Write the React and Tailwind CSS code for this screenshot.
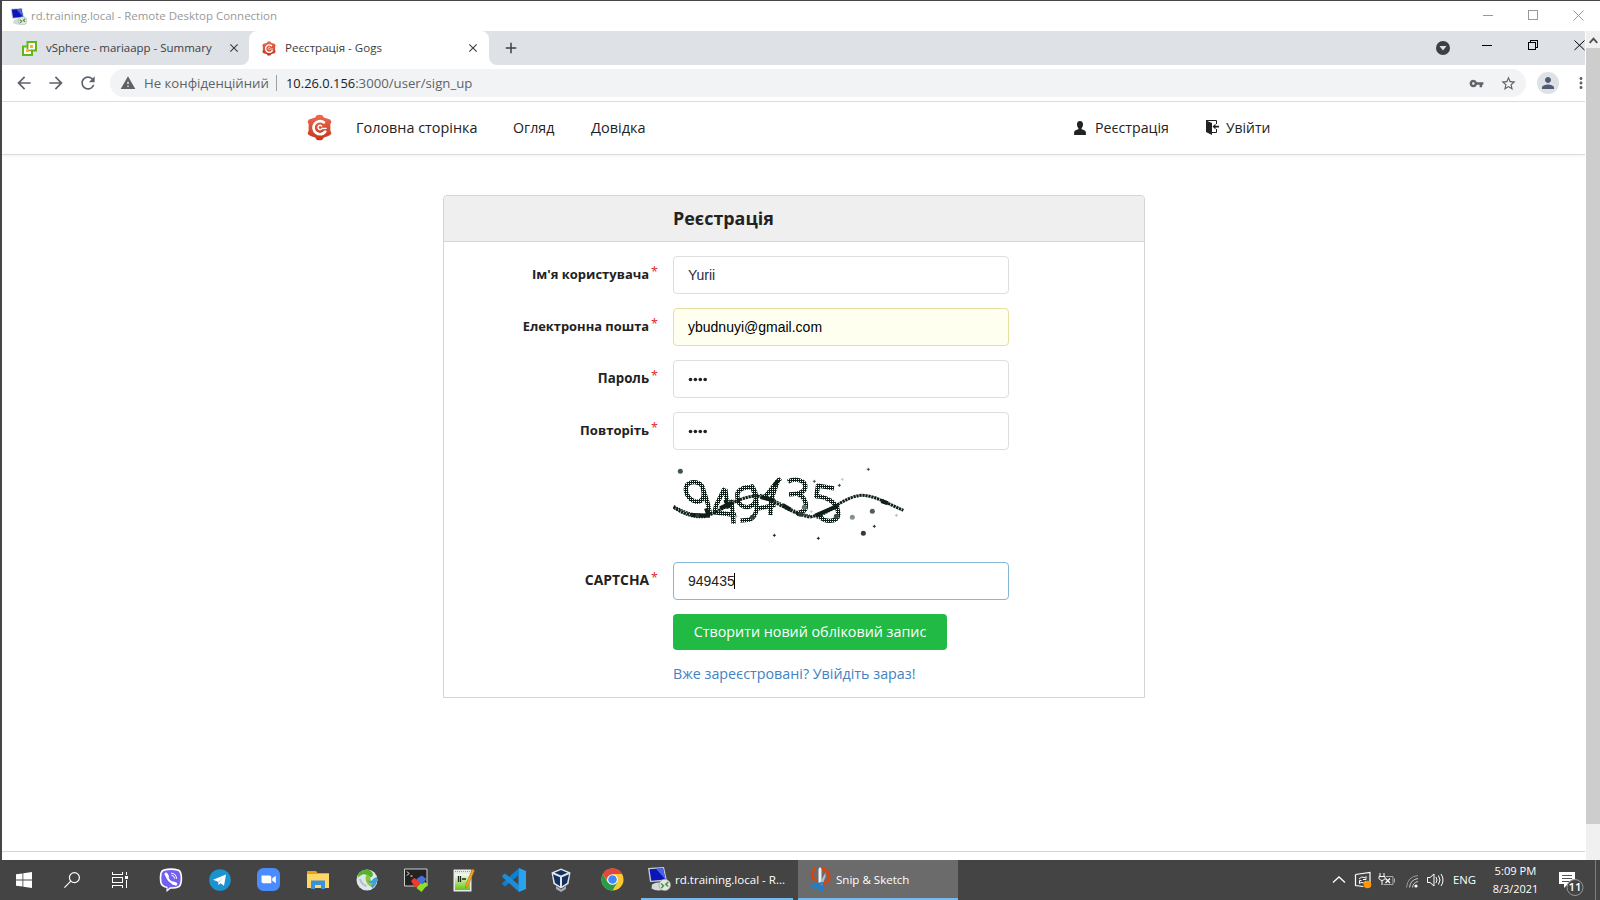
import {
  MdArrowBack, MdArrowForward, MdRefresh, MdWarning, MdVpnKey, MdStarBorder, MdPerson, MdMoreVert, MdClose, MdAdd,
} from "react-icons/md";

function GogsLogo({ className }) {
  return (
    <svg viewBox="0 0 26 27" className={className}>
      <defs>
        <linearGradient id="gogs" x1="0" y1="0" x2="0" y2="1">
          <stop offset="0" stopColor="#ee6a4e" />
          <stop offset="1" stopColor="#c2371d" />
        </linearGradient>
      </defs>
      <g fill="url(#gogs)">
        <path d="M10 .8Q13 -.4 16 .8L17.500 3.200 21.500 4.300Q24.500 4.500 25.400 7.500L24.300 10.500V16.500L25.400 19.500Q24.500 22.500 21.500 22.700L17.500 23.800 16 26.200Q13 27.400 10 26.200L8.500 23.800 4.500 22.700Q1.500 22.500.6 19.500L1.700 16.500V10.500L.6 7.500Q1.500 4.500 4.500 4.300L8.500 3.200z" />
      </g>
      <path d="M17.600 8.200A6.800 6.800 0 1 0 19 17.800" fill="none" stroke="#fff" strokeWidth="2.800" strokeLinecap="round" />
      <path d="M15.200 11.900A2.200 2.200 0 1 0 15.500 14.600L20 14.400" fill="none" stroke="#fff" strokeWidth="1.500" strokeLinecap="round" />
    </svg>
  );
}

function RdpIcon({ className }) {
  return (
    <svg viewBox="0 0 24 24" className={className}>
      <path d="M1 1 L17 0 L20 14 L3 15 Z" fill="#c9ccd3" />
      <path d="M2.5 2.2 L16 1.2 L18.5 12.6 L4.3 13.8 Z" fill="#0b16b8" />
      <path d="M9 1.8 L16 1.2 L18.5 12.6 Z" fill="#4b62e6" />
      <path d="M5 17.5 Q10 14.5 14 16 L17 22.5 Q10 25 4.5 21.5 Z" fill="#d5d8dc" />
      <circle cx="17.8" cy="18" r="5.8" fill="#e3e6e3" stroke="#8c918c" strokeWidth=".6" />
      <path d="M14 16.5 L16.5 18.7 L14.3 21 M21.3 15.2 L18.8 17.2 L21.2 19.4" fill="none" stroke="#3f9b35" strokeWidth="1.5" />
    </svg>
  );
}

const crosses = [
  [625, 43, "#3d4a45"], [547, 73, "#b9cfc8"], [463, 79, "#4b5a54"], [538, 91, "#2f3b37"], [454, 170, "#b9cfc8"],
  [709, 181, "#a9c2b8"], [643, 214, "#1e2e27"], [343, 241, "#15251e"], [475, 250, "#15251e"], [229, 184, "#b0c4bc"],
];
const blobs = [
  [61, 49, 7.5, "#43544d"], [433, 157, 7.5, "#62756d"], [421, 178, 7.5, "#2c3c35"], [277, 187, 7.5, "#33433c"],
  [529, 184, 7.5, "#3a4b43"], [577, 187, 7.5, "#82958d"], [637, 169, 7.5, "#4e6058"], [610, 235, 7.5, "#2d3f37"], [112, 182, 6, "#2c3c35"],
];

function Captcha() {
  return (
    <svg viewBox="39 27 720 240" className="h-20 w-60">
      <defs>
        <pattern id="mesh" width="6" height="6" patternUnits="userSpaceOnUse">
          <rect width="6" height="6" fill="#0d1f17" />
          <rect x="0" y="0" width="3" height="3" fill="#fff" />
        </pattern>
      </defs>
      <g fill="none" stroke="url(#mesh)" strokeWidth="13" strokeLinejoin="round">
        <path d="M130 104 C126 78 94 76 81 90 C72 106 82 134 108 140 C128 142 136 126 128 98 L144 148 L150 176" />
        <path d="M194 100 L168 152 L164 172 L228 180 M196 102 L203 160 M214 134 L217 166 L221 206" />
        <path d="M278 96 C250 96 230 104 232 122 C232 142 242 158 266 156 C290 150 296 122 276 94 L288 130 C294 160 288 184 270 194 L241 197" />
        <path d="M361 70 L350 82 L310 132 M352 82 L334 132 L331 180 M296 160 L346 150" />
        <path d="M384 80 C404 68 436 76 436 94 C436 112 414 118 387 118 M414 118 C432 122 444 148 434 166 L408 178" />
        <path d="M522 100 L474 92 L469 124 C494 124 536 140 535 180 C530 204 492 202 478 182" />
      </g>
      <g fill="none" stroke="#0d1f17">
        <path strokeWidth="9" strokeDasharray="7 2" d="M40 156 C75 178 105 186 140 182 C180 172 232 124 290 123 C340 130 390 176 450 186 C510 176 550 124 605 121 C650 122 690 150 730 166" />
        <path strokeWidth="4" strokeDasharray="5 3" d="M42 152 C77 173 107 181 140 177 M42 160 C75 183 105 191 140 187 M300 118 C342 125 392 171 450 181 M470 190 L540 152" />
        <path strokeWidth="12" d="M96 180 L150 182 M180 160 L214 143 M302 126 L344 137 M342 92 L354 76 M368 150 L392 164 M466 182 L530 154 M664 138 L684 145 M196 134 L206 160 M138 160 L146 182" />
      </g>
      {blobs.map(([x, y, r, c]) => <circle key={x} cx={x} cy={y} r={r} fill={c} />)}
      {crosses.map(([x, y, c]) => <path key={x} d={`M${x - 4.5} ${y}h9M${x} ${y - 4.5}v9`} stroke={c} strokeWidth="3" />)}
    </svg>
  );
}

function TitleBar() {
  return (
    <header className="flex h-[30px] shrink-0 items-center bg-white pl-[8px]">
      <RdpIcon className="h-[17px] w-[17px]" />
      <span className="ml-1 text-[11.48px] text-[#999]">rd.training.local - Remote Desktop Connection</span>
      <svg className="ml-auto mr-[15px] h-[12px] w-[103px]" viewBox="0 0 103 12" fill="none" stroke="#999" shapeRendering="crispEdges">
        <path d="M1 5.5H11M46.5 .5h9v9h-9z" />
        <path d="M91.5 .5l10 10M101.5 .5l-10 10" shapeRendering="auto" />
      </svg>
    </header>
  );
}

function TabStrip() {
  return (
    <div className="flex h-[34px] shrink-0 bg-white text-[11.47px] text-[#3c4043]">
      <div className="flex w-[247px] items-center rounded-br-lg bg-[#dee1e6] pl-5">
        <svg viewBox="0 0 15 15" className="h-[15px] w-[15px]">
          <path d="M5.5 1h8.5v8.5h-4v4.500H1V5.500h4.500z" fill="#fff" stroke="#61b715" strokeWidth="2" />
          <path d="M5.500 6v3.500h4" fill="none" stroke="#61b715" strokeWidth="1.500" />
          <rect x="8" y="4" width="3" height="3" fill="#fbb034" />
          <rect x="4" y="8" width="3" height="3" fill="#fbb034" />
        </svg>
        <span className="ml-[9px] w-[181px] whitespace-nowrap">vSphere - mariaapp - Summary</span>
        <MdClose className="h-[14px] w-[14px]" stroke="currentColor" />
      </div>
      <div className="w-[240px] bg-[linear-gradient(#dee1e6_50%,#fff_50%)]">
        <div className="flex h-full items-center rounded-t-lg bg-white pl-[13px]">
          <GogsLogo className="h-[15px] w-[14px]" />
          <span className="ml-[9px] w-[181px] whitespace-nowrap text-[11.55px]">Реєстрація - Gogs</span>
          <MdClose className="h-[14px] w-[14px]" stroke="currentColor" />
        </div>
      </div>
      <div className="flex flex-1 rounded-bl-lg bg-[#dee1e6] pl-[13px]">
        <MdAdd className="mt-2 h-[18px] w-[18px]" />
        <svg className="ml-auto mt-2 h-[20px] w-[150px]" viewBox="0 0 150 20">
          <circle cx="8" cy="9" r="7" fill="#3c4043" />
          <path d="M4.500 7h7l-3.500 4.500z" fill="#dee1e6" />
          <g fill="none" stroke="#000" shapeRendering="crispEdges">
            <path d="M47 6.500h10M93.500 3.500h7v7h-7zM95.500 3.500v-2h7v7h-2" />
            <path d="M139.500 1.500l10 9.500M149.500 1.500l-10 9.500" shapeRendering="auto" />
          </g>
        </svg>
      </div>
    </div>
  );
}

function Toolbar() {
  return (
    <div className="flex h-[37px] shrink-0 items-center border-b border-[#dadce0] bg-white pl-3 text-[#5f6368]">
      <MdArrowBack className="h-5 w-5" />
      <MdArrowForward className="ml-3 h-5 w-5" />
      <MdRefresh className="ml-3 h-5 w-5" />
      <div className="ml-3 flex h-7 w-[1416px] shrink-0 items-center rounded-full bg-[#f1f3f4] pl-[10px] text-[13.2px]">
        <MdWarning className="h-4 w-4" />
        <span className="ml-[8px] w-[132px] whitespace-nowrap pt-px">Не конфіденційний</span>
        <span className="h-4 w-px bg-[#9aa0a6]" />
        <span className="ml-[9px] whitespace-nowrap pt-px"><span className="text-[12.9px] text-[#202124]">10.26.0.156</span>:3000/user/sign_up</span>
        <MdVpnKey className="ml-auto h-[15px] w-[15px]" />
        <MdStarBorder className="ml-[16px] mr-[9px] h-[17px] w-[17px]" />
      </div>
      <span className="ml-[11px] flex h-[22px] w-[22px] shrink-0 items-center justify-center rounded-full bg-[#dee1e6]">
        <MdPerson className="h-[18px] w-[18px] text-[#505a72]" />
      </span>
      <MdMoreVert className="-mr-3 ml-[13px] h-[18px] w-[18px] shrink-0" />
    </div>
  );
}

function NavBar() {
  return (
    <nav className="flex h-[53px] shrink-0 items-center border-b border-[#dbdbdb] bg-white pb-px pl-[305px] text-[14.4px] text-[#222] shadow-[0_2px_3px_rgba(0,0,0,0.04)]">
      <GogsLogo className="h-[27px] w-[25px]" />
      <span className="ml-6 w-[157px]">Головна сторінка</span>
      <span className="w-[78px] text-[14.2px]">Огляд</span>
      <span className="text-[14.5px]">Довідка</span>
      <svg viewBox="0 0 12 14" className="ml-auto h-[14px] w-[12px]" fill="#222">
        <path d="M6 0C8 0 9.200 1.500 9 3.600 8.900 5.500 8.300 6.600 7.600 7.200v1.100c2.400.6 4.300 1.500 4.300 3.200V14H.100v-2.500c0-1.700 1.900-2.600 4.300-3.200V7.200C3.700 6.600 3.100 5.500 3 3.600 2.800 1.500 4 0 6 0z" />
      </svg>
      <span className="ml-[9px] w-[111px] text-[14.2px]">Реєстрація</span>
      <svg viewBox="0 0 13 15" className="h-[15px] w-[13px]" fill="#222">
        <path d="M0 .500L6 3V15L0 12z" />
        <path d="M0 .500h10.500V4M10.500 9v3.500H6" fill="none" stroke="#222" />
        <path d="M6.500 6.500L9.500 3.800V5.700H13v1.700H9.500v2z" />
      </svg>
      <span className="ml-[7px] w-[359px] pt-px text-[13.9px]">Увійти</span>
    </nav>
  );
}

function Row({ label, size, children }) {
  return (
    <div className="flex h-[38px]">
      <label className={`mr-[15px] w-[214px] pt-[8px] text-right font-bold leading-5 text-[#222] ${size || "text-[13px]"}`}>
        {label}
        <span className="ml-[2px] inline-block -translate-y-[3px] text-[12.5px] font-normal text-[#db2828]">*</span>
      </label>
      {children}
    </div>
  );
}

function Field({ children, className }) {
  return (
    <div className={`flex w-[336px] items-center rounded border pl-[14px] font-['Liberation_Sans',sans-serif] text-[14px] ${className}`}>
      {children}
    </div>
  );
}

function Dots() {
  return (
    <svg className="mt-px h-[5px] w-[20px]" viewBox="0 0 20 5" fill="#222">
      {[2.500, 7.400, 12.300, 17.200].map((x) => <circle key={x} cx={x} cy="2.500" r="1.8" />)}
    </svg>
  );
}

function SignUp() {
  return (
    <section className="ml-[441px] mt-10 h-[503px] w-[702px] rounded-t border border-[#d4d4d5] bg-white">
      <h1 className="flex h-[46px] items-center rounded-t border-b border-[#d4d4d5] bg-[#efefef] pl-[229px] text-[17.9px] font-bold text-[#222]">
        Реєстрація
      </h1>
      <form className="flex flex-col gap-[14px] pt-[14px]">
        <Row label="Ім'я користувача"><Field className="border-[#dededf] text-[#2b2b44]">Yurii</Field></Row>
        <Row label="Електронна пошта" size="text-[12.9px]"><Field className="border-[#e5dfa1] bg-[#fffff0] text-black">ybudnuyi@gmail.com</Field></Row>
        <Row label="Пароль" size="text-[13.3px]"><Field className="border-[#dededf]"><Dots /></Field></Row>
        <Row label="Повторіть" size="text-[13.1px]"><Field className="border-[#dededf]"><Dots /></Field></Row>
        <div className="mb-1 pl-[229px]"><Captcha /></div>
        <Row label="CAPTCHA" size="text-[13.9px]">
          <Field className="border-[#85b7d9] text-[#222]">949435<span className="-ml-px h-4 w-px bg-black" /></Field>
        </Row>
        <button type="button" className="ml-[229px] flex h-9 w-[274px] items-center justify-center rounded bg-[#21ba45] text-[14.32px] text-white">
          Створити новий обліковий запис
        </button>
        <a className="ml-[229px] text-[14.3px] leading-5 text-[#4183c4]">Вже зареєстровані? Увійдіть зараз!</a>
      </form>
    </section>
  );
}

function Scrollbar() {
  return (
    <div className="ml-px flex w-[14px] flex-col bg-[#f0f0f0]">
      <svg viewBox="0 0 14 18" className="h-[17px] w-[14px]">
        <path d="M3.500 12.500l4-4.500 4 4.500" fill="none" stroke="#505050" strokeWidth="2" />
      </svg>
      <div className="h-[776px] bg-[#cdcdcd]" />
    </div>
  );
}

function Slot({ w, children }) {
  return <span className={`flex h-full shrink-0 items-center justify-center pb-px ${w}`}>{children}</span>;
}

function Taskbar() {
  return (
    <footer className="flex h-10 shrink-0 items-center bg-[#444] text-[11.55px] text-white">
      <Slot w="w-12">
        <svg viewBox="0 0 16 16" className="h-4 w-4" fill="#fff"><path d="M0 2.300L6.500 1.400V7.600H0zM7.300 1.300L16 0V7.600H7.300zM0 8.400H6.500V14.600L0 13.700zM7.300 8.400H16V16L7.300 14.700z" /></svg>
      </Slot>
      <Slot w="w-12">
        <svg viewBox="0 0 16 16" className="h-4 w-4" fill="none" stroke="#fff" strokeWidth="1.200"><circle cx="10.400" cy="5.600" r="5" /><path d="M6.800 9.200L.4 15.600" /></svg>
      </Slot>
      <Slot w="w-12">
        <svg viewBox="0 0 16 16" className="mt-px h-4 w-4" fill="none" stroke="#fff" shapeRendering="crispEdges"><path d="M.500 0v2.500h10V0M.500 16v-2.500h10V16M.500 5.500h10v5H.500zM14.500 0v3M14.500 8v8" /><path d="M13 4h3v3h-3z" fill="#fff" stroke="none" /></svg>
      </Slot>
      <Slot w="w-[53px]">
        <svg viewBox="0 0 24 24" className="h-6 w-6">
          <path d="M4 1.500Q12-.800 20 1.500 23 3 23.200 10 23.200 17 20.500 19.300 17 21 11.500 20.800L7.500 24V20Q2 19 1.200 15 .2 10 1.200 5 2 2 4 1.500z" fill="#fff" />
          <path d="M4.800 3Q12 1 19.200 3 21.500 4.500 21.600 10 21.600 16 19.500 18 16 19.500 11 19.200L8.500 21.500V18.800Q3.600 18 2.700 14.500 1.900 10 2.700 5.500 3.500 3.500 4.800 3z" fill="#7360f2" />
          <g fill="none" stroke="#fff" strokeLinecap="round"><path d="M7.300 6.500Q8.500 13.500 16 16" strokeWidth="2" /><path d="M7 6l1.500 2.500M14 15l2.800 1" strokeWidth="3" /><path d="M12.500 5.200q5 .4 5 5.300M12.800 7.300q2.800.3 2.900 3" strokeWidth="1" /></g>
        </svg>
      </Slot>
      <Slot w="w-[45px]">
        <svg viewBox="0 0 22 22" className="h-[22px] w-[22px]"><circle cx="11" cy="11" r="10.800" fill="#1c93d1" /><path d="M4 10.800L17 5.600 15 16.700 11.500 14.200 9.500 16 9 12.700z" fill="#fff" /><path d="M9 12.700L14.500 8 10.500 13.300 9.500 16z" fill="#c3daea" /></svg>
      </Slot>
      <Slot w="w-[53px]">
        <svg viewBox="0 0 23 23" className="h-[23px] w-[23px]"><rect width="23" height="23" rx="6.500" fill="#4a8cff" /><path d="M4.500 7.500h8q1.800 0 1.800 1.800v6h-8q-1.800 0-1.800-1.800zM15.300 10.200L18.800 7.800V15.200L15.300 12.800z" fill="#fff" /></svg>
      </Slot>
      <Slot w="w-[46px]">
        <svg viewBox="0 0 22 18" className="h-[18px] w-[22px]"><path d="M0 0h9l1.500 2H22v15H0z" fill="#e8a317" /><path d="M0 3h22v14H0z" fill="#ffd766" /><path d="M4 18V9.500h14V18h-4v-4H8v4z" fill="#3d8fd8" /></svg>
      </Slot>
      <Slot w="w-[52px]">
        <svg viewBox="0 0 22 22" className="h-[22px] w-[22px]">
          <circle cx="11" cy="11" r="10.500" fill="#dfe7ec" />
          <path d="M1.500 9 Q2 1 11 .500 16.500 1 17 6 16 9 12.500 8.500 10.500 4.500 6.500 5.500 3.500 6.500 1.500 9z" fill="#58b030" />
          <path d="M10.500 5.500Q14 6 14.500 9.500 14.500 13 18 14.500L16.500 18.500Q9.500 15.500 9.500 9z" fill="#8cc63f" />
          <path d="M11 10.500Q15 14 17.500 9.500L20.800 8Q22.500 14 16.500 19.500L15 16.500 18 14Q12.500 15 11 10.500z" fill="#3f9fd8" />
          <path d="M4 10Q5.500 15.500 10.500 17" fill="none" stroke="#b3bdc4" strokeWidth="2" />
        </svg>
      </Slot>
      <Slot w="w-[45px]">
        <svg viewBox="0 0 24 24" className="h-6 w-6">
          <path d="M.500 1h22.500v17H.500z" fill="#222" stroke="#cfcfcf" />
          <path d="M3 3.500l2 2-2 2M6.500 8h2" fill="none" stroke="#fff" />
          <path d="M7 13l3-3 3 1.500 3-2.500 3 3-4 5.500-4 2z" fill="#ee3a2f" />
          <path d="M13.500 10L18 7.500 22.500 11l-5 6-4-3z" fill="#4a6ee0" />
          <path d="M9 16l4-4.500 3 3-3.500 5z" fill="#ee3a2f" />
          <path d="M12.500 20l4-4.500 2 .5 2-2 3.500 2-6.500 8z" fill="#8be02a" />
        </svg>
      </Slot>
      <Slot w="w-[52px]">
        <svg viewBox="0 0 22 24" className="h-6 w-[22px]"><defs><linearGradient id="npp" x1="0" y1="0" x2="0" y2="1"><stop offset="0" stopColor="#f5ffe8" /><stop offset="1" stopColor="#66c414" /></linearGradient></defs><path d="M.500 1.500h18v22H.500z" fill="#e9e9e9" /><path d="M2 6h15v16H2z" fill="url(#npp)" /><path d="M2 3.500h15" stroke="#999" strokeDasharray="1 1" /><path d="M5.500 8v6M7.500 8v6M9 11h4" stroke="#222" strokeWidth="1.300" /><path d="M19.500 1l2 1.500L15 18l-2.500 2 .2-3.500z" fill="#f0a622" stroke="#a86a10" strokeWidth=".500" /></svg>
      </Slot>
      <Slot w="w-[48px]">
        <svg viewBox="0 0 24 24" className="h-6 w-6"><path d="M17 0L24 3V21L17 24L16.500 17V7z" fill="#2aa3ee" /><path d="M17 0V7L3 18.500 .300 16.500V15z" fill="#0f7fce" /><path d="M17 24V17L3 5.500.300 7.500V9z" fill="#1b8ddb" /></svg>
      </Slot>
      <Slot w="w-[46px]">
        <svg viewBox="0 0 20 24" className="h-6 w-5"><path d="M10 .500L19.500 4.500 17.500 16 10 20.500 2.500 16 .500 4.500z" fill="#dfe6ee" /><path d="M10 2l6.500 2.700L10 7.500 3.500 4.700zM2 6.200l7 3v9L4 15zM18 6.200l-7 3v9L16 15z" fill="#14305c" /><path d="M5 18l5 3.500 5-3.500v3l-5 3-5-3z" fill="#a5adb8" /></svg>
      </Slot>
      <Slot w="w-[56px]">
        <svg viewBox="0 0 24 24" className="h-[23px] w-[23px]"><circle cx="12" cy="12" r="11.500" fill="#fbc934" /><path d="M12 12L2.040 6.250A11.500 11.500 0 0 1 21.960 6.250H12z" fill="#e2483b" /><path d="M2.040 6.250A11.500 11.500 0 0 0 12 23.500L17 14.900 12 12 7 14.900z" fill="#279d4c" /><path d="M12 6.250H22L17.500 12z" fill="#fbc934" /><path d="M2.040 6.250A11.500 11.500 0 0 1 21.960 6.250H12A5.750 5.750 0 0 0 7 9.100L6 12.500z" fill="#e2483b" /><circle cx="12" cy="12" r="5.600" fill="#fff" /><circle cx="12" cy="12" r="4.500" fill="#4587f3" /></svg>
      </Slot>
      <div className="ml-px flex h-full w-[152px] items-center whitespace-nowrap border-b-2 border-[#76b9ed] pl-[6px]">
        <RdpIcon className="h-6 w-6" />
        <span className="ml-[4px] pt-[2px]">rd.training.local - R...</span>
      </div>
      <div className="ml-[5px] flex h-full w-[160px] items-center border-b-2 border-[#76b9ed] bg-[#6b6b6b] pl-[13px]">
        <svg viewBox="0 0 20 24" className="h-6 w-5">
          <path d="M5 1.500Q.500 3 1.500 8.500 2.500 13 6 14" fill="none" stroke="#d8430f" strokeWidth="2.800" />
          <path d="M10 1.500Q17 2 18 9 18.500 15.500 12.500 16.500" fill="none" stroke="#d8430f" strokeWidth="3" />
          <path d="M7.500 2l1.500-2 1.500 2v15h-3z" fill="#eceff1" />
          <path d="M14.500 5.500l-6 11 2.500 1.500 3.500-8z" fill="#b8bec4" />
          <path d="M5 17l7-1" stroke="#1583d8" strokeWidth="2" />
          <circle cx="3.500" cy="18.500" r="2.300" fill="none" stroke="#1583d8" strokeWidth="2" />
          <circle cx="10" cy="21" r="2" fill="none" stroke="#1583d8" strokeWidth="2" />
        </svg>
        <span className="ml-[5px] pt-[2px]">Snip &amp; Sketch</span>
      </div>
      <svg className="ml-auto h-10 w-[114px] shrink-0" viewBox="1332 860 114 40" fill="none" stroke="#fff">
        <path d="M1333 882.500l6-5.500 6 5.500" strokeWidth="1.300" />
        <path d="M1355.500 874.500l14.500-2v14M1355.500 874.500v11l8 1" strokeWidth="1.200" />
        <path d="M1359 879q2-3 6-1.500l1-1v3h-3M1366 881q-2 3-5 1.500l-1.500 1v-3h2" strokeWidth="1" />
        <circle cx="1367.500" cy="884.500" r="3.800" fill="#ff9800" stroke="none" />
        <path d="M1380 873v3M1384 873v3M1379 876.500h6v2q-1 2-3 2t-3-2zM1382 880.500v4.500" />
        <path d="M1386 876.500h7v8h-9.500M1394.500 878.500v4" stroke="#aaa" />
        <path d="M1385.500 878.500l4.500 4.500M1390 878.500l-4.500 4.500" strokeWidth="1.300" />
        <path d="M1406.500 887.500q1-11 11.500-12" stroke="#999" />
        <path d="M1409.500 887.500q1-8 8.500-9M1412.500 887.500q.500-5 5.500-6" stroke="#ccc" />
        <circle cx="1416" cy="886" r="1.600" fill="#fff" stroke="none" />
        <path d="M1427.500 877.500h2.500l4-3.500v12l-4-3.500h-2.500z" />
        <path d="M1436 877q2 3 0 6M1438.500 875.500q3 4.500 0 9M1441 874q4 6 0 12" />
      </svg>
      <span className="ml-[7px] w-[38px] text-[11.3px]">ENG</span>
      <div className="w-[49px] text-center text-[11.2px] leading-[18px]">
        <div>5:09 PM</div>
        <div className="text-[10.95px]">8/3/2021</div>
      </div>
      <div className="relative ml-[19px] h-10 w-[36px]">
        <svg viewBox="0 0 36 40" className="h-10 w-[36px]"><path d="M0 12h16v12H9l-4 4v-4H0z" fill="#fff" /><path d="M3 15.500h10M3 18.500h10M3 21.500h7" stroke="#555" /><circle cx="16" cy="27.500" r="8" fill="#444" stroke="#999" /></svg>
        <span className="absolute left-2 top-[19px] w-4 text-center text-[11.5px] font-semibold leading-[16px]">11</span>
      </div>
      <span className="mr-[4px] h-10 w-px bg-[#7d7d7d]" />
    </footer>
  );
}

export default function App() {
  return (
    <div className="flex h-[900px] w-[1600px] flex-col overflow-hidden bg-[#47444a] font-['Open_Sans',sans-serif]">
      <div className="mt-px flex h-[859px] shrink-0 flex-col pl-[2px]">
        <TitleBar />
        <div className="flex flex-1 bg-white">
          <main className="flex w-[1583px] flex-col overflow-hidden bg-white">
            <TabStrip />
            <Toolbar />
            <NavBar />
            <SignUp />
            <div className="mt-auto h-[9px] border-t border-[#d4d4d5] bg-white" />
          </main>
          <Scrollbar />
        </div>
      </div>
      <Taskbar />
    </div>
  );
}
